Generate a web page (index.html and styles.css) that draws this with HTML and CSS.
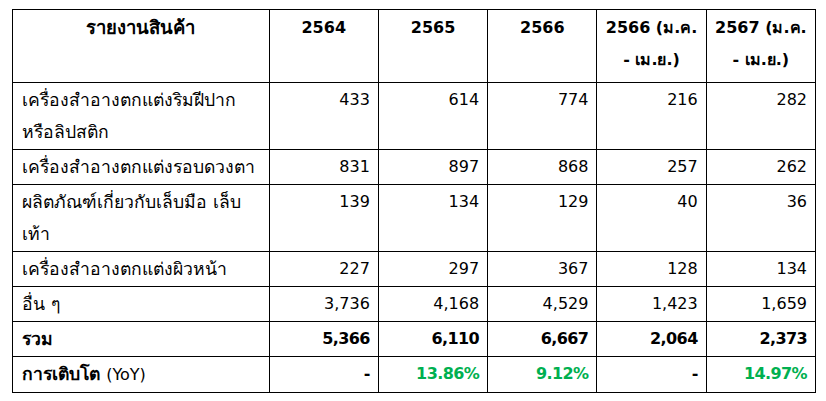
FILE: index.html
```html
<!DOCTYPE html>
<html lang="th">
<head>
<meta charset="utf-8">
<link rel="stylesheet" href="styles.css">
</head>
<body>
<table class="report">
  <colgroup>
    <col class="c-name"><col class="c-num"><col class="c-num"><col class="c-num"><col class="c-num"><col class="c-num">
  </colgroup>
  <thead>
    <tr>
      <th class="name">รายงานสินค้า</th>
      <th>2564</th>
      <th>2565</th>
      <th>2566</th>
      <th>2566 (ม.ค. - เม.ย.)</th>
      <th>2567 (ม.ค. - เม.ย.)</th>
    </tr>
  </thead>
  <tbody>
    <tr><td>เครื่องสำอางตกแต่งริมฝีปากหรือลิปสติก</td><td>433</td><td>614</td><td>774</td><td>216</td><td>282</td></tr>
    <tr><td>เครื่องสำอางตกแต่งรอบดวงตา</td><td>831</td><td>897</td><td>868</td><td>257</td><td>262</td></tr>
    <tr><td>ผลิตภัณฑ์เกี่ยวกับเล็บมือ เล็บเท้า</td><td>139</td><td>134</td><td>129</td><td>40</td><td>36</td></tr>
    <tr><td>เครื่องสำอางตกแต่งผิวหน้า</td><td>227</td><td>297</td><td>367</td><td>128</td><td>134</td></tr>
    <tr><td>อื่น ๆ</td><td>3,736</td><td>4,168</td><td>4,529</td><td>1,423</td><td>1,659</td></tr>
    <tr class="bold"><td>รวม</td><td>5,366</td><td>6,110</td><td>6,667</td><td>2,064</td><td>2,373</td></tr>
    <tr class="bold"><td>การเติบโต <span class="latin">(YoY)</span></td><td>-</td><td class="up">13.86%</td><td class="up">9.12%</td><td>-</td><td class="up">14.97%</td></tr>
  </tbody>
</table>
</body>
</html>
```
FILE: styles.css
```css
html, body {
  margin: 0;
  padding: 0;
  background: #ffffff;
}
body {
  padding: 9px 0 0 12px;
  font-family: "DejaVu Sans", "Noto Sans", sans-serif;
  font-size: 16px;
  color: #000000;
}
.report {
  border-collapse: collapse;
  table-layout: fixed;
  width: 804px;
}
.c-name { width: 256px; }
.c-num { width: 109px; }
.report th,
.report td {
  border: 1px solid #000000;
  vertical-align: top;
  line-height: 32px;
  padding: 1px 8px 1px 8px;
}
.report th {
  text-align: center;
  font-weight: bold;
  padding-top: 2px;
  padding-bottom: 6px;
}
.report th.name {
  font-size: 18.5px;
}
.report td {
  text-align: right;
}
.report td:first-child {
  text-align: left;
  font-size: 17.6px;
  padding-left: 9px;
}
.bold td {
  font-weight: bold;
  letter-spacing: -0.6px;
}
.bold td:first-child {
  letter-spacing: 0;
}
.bold td .latin {
  font-weight: normal;
  font-size: 16px;
}
.up {
  color: #00b050;
}
```
